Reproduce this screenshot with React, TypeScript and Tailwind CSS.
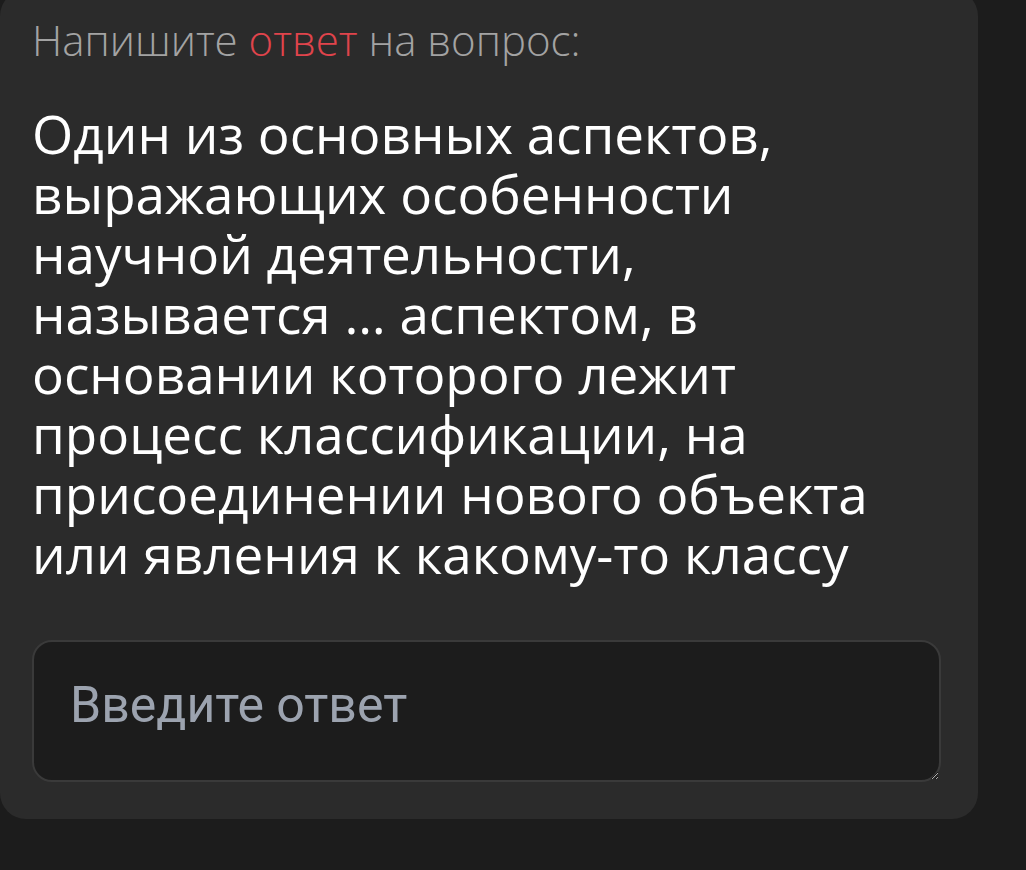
import React from "react";

const lines = [
  "Один из основных аспектов,",
  "выражающих особенности",
  "научной деятельности,",
  "называется … аспектом, в",
  "основании которого лежит",
  "процесс классификации, на",
  "присоединении нового объекта",
  "или явления к какому-то классу",
];

export default function App() {
  return (
    <div className="min-h-[870px] w-full bg-[#1c1c1c] overflow-hidden">
      <div className="-mt-[10px] w-[978px] rounded-[26px] bg-[#2b2b2b] pl-[32px] pr-[37px] pt-[24px] pb-[37px]">
        <p className="font-['Open_Sans',sans-serif] text-[42px] leading-[52px] font-light text-[#a3a3a3] whitespace-nowrap">
          Напишите <span className="text-[#e0444c]">ответ</span> на вопрос:
        </p>

        <div className="mt-[38px] font-['Open_Sans',sans-serif] text-[53px] leading-[60px] text-white">
          {lines.map((line) => (
            <div key={line} className="whitespace-nowrap">
              {line}
            </div>
          ))}
        </div>

        <textarea
          placeholder="Введите ответ"
          className="mt-[56px] block h-[142px] w-full rounded-[20px] border-2 border-[#3a3a3a] bg-[#1c1c1c] px-[36px] pt-[34px] font-['Roboto',sans-serif] text-[50px] leading-[58px] text-white outline-none placeholder:text-[#9ca3af]"
        />
      </div>
    </div>
  );
}
